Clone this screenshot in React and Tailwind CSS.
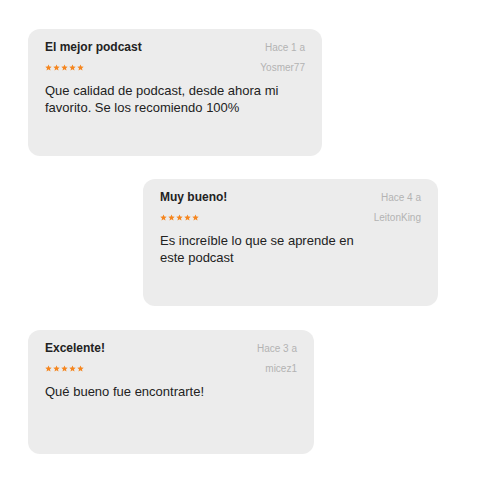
import React from "react";

function Stars() {
  return (
    <div className="flex gap-[1px]">
      {[0, 1, 2, 3, 4].map((i) => (
        <svg key={i} width="7" height="7" viewBox="0 0 24 24">
          <path
            d="M12 1.5l3.1 7.2 7.9.7-6 5.2 1.8 7.7L12 18.3l-6.8 4 1.8-7.7-6-5.2 7.9-.7z"
            fill="#f5861f"
          />
        </svg>
      ))}
    </div>
  );
}

function Card({ title, date, user, lines, className }) {
  return (
    <div
      className={`bg-[#ececec] rounded-[12px] pt-[10px] px-[17px] ${className}`}
      style={{ fontFamily: '"Liberation Sans", Arial, sans-serif' }}
    >
      <div className="flex items-center justify-between h-[16px]">
        <span className="text-[12px] font-bold text-[#222]">{title}</span>
        <span className="text-[10px] text-[#b3b3b3]">{date}</span>
      </div>
      <div className="flex items-center justify-between h-[16px] mt-[4px]">
        <Stars />
        <span className="text-[10px] text-[#b3b3b3]">{user}</span>
      </div>
      <div className="mt-[7px] text-[13px] leading-[17px] text-[#222]">
        {lines.map((l, i) => (
          <div key={i}>{l}</div>
        ))}
      </div>
    </div>
  );
}

export default function App() {
  return (
    <div className="w-[500px] h-[500px] bg-white flex flex-col pt-[29px] gap-[23px]">
      <Card
        className="ml-[28px] w-[294px] h-[127px]"
        title="El mejor podcast"
        date="Hace 1 a"
        user="Yosmer77"
        lines={["Que calidad de podcast, desde ahora mi", "favorito. Se los recomiendo 100%"]}
      />
      <Card
        className="ml-[143px] w-[295px] h-[127px]"
        title="Muy bueno!"
        date="Hace 4 a"
        user="LeitonKing"
        lines={["Es increíble lo que se aprende en", "este podcast"]}
      />
      <Card
        className="ml-[28px] w-[286px] h-[124px] mt-[1px]"
        title="Excelente!"
        date="Hace 3 a"
        user="micez1"
        lines={["Qué bueno fue encontrarte!"]}
      />
    </div>
  );
}
